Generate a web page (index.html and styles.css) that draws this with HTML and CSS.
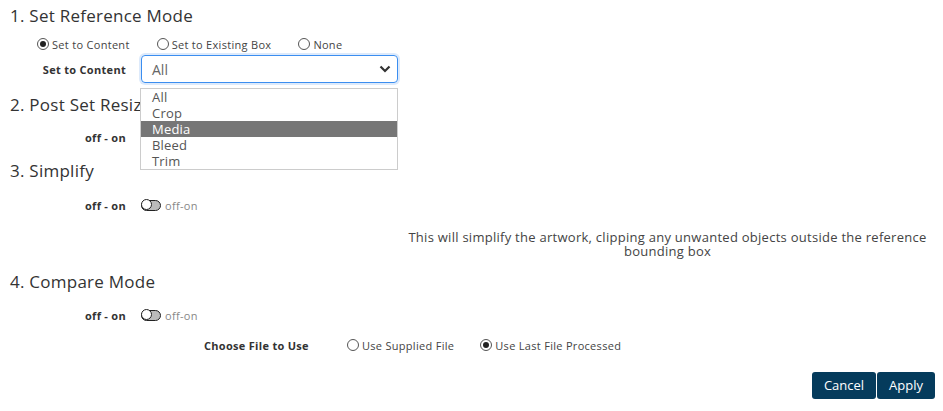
FILE: index.html
```html
<!DOCTYPE html>
<html>
<head>
<meta charset="utf-8">
<link rel="stylesheet" href="styles.css">
</head>
<body>
<div class="page">
  <h2 class="sec-title first">1. Set Reference Mode</h2>
  <div class="radio-row">
    <label class="radio"><span class="dot checked"></span>Set to Content</label>
    <label class="radio"><span class="dot"></span>Set to Existing Box</label>
    <label class="radio"><span class="dot"></span>None</label>
  </div>
  <div class="field-row select-row">
    <span class="field-label">Set to Content</span>
    <div class="select-wrap">
      <div class="select">
        <span>All</span>
        <svg class="chev" width="12" height="8" viewBox="0 0 12 8"><path d="M1.5 1.5 L6 6 L10.5 1.5" fill="none" stroke="#333" stroke-width="2.2"/></svg>
      </div>
      <ul class="options">
        <li>All</li>
        <li>Crop</li>
        <li class="active">Media</li>
        <li>Bleed</li>
        <li>Trim</li>
      </ul>
    </div>
  </div>

  <h2 class="sec-title">2. Post Set Resize</h2>
  <div class="field-row toggle-row r2">
    <span class="field-label">off - on</span>
  </div>

  <h2 class="sec-title s3">3. Simplify</h2>
  <div class="field-row toggle-row r3">
    <span class="field-label">off - on</span>
    <span class="toggle"><span class="knob"></span></span>
    <span class="toggle-text">off-on</span>
  </div>
  <p class="desc">This will simplify the artwork, clipping any unwanted objects outside the reference bounding box</p>

  <h2 class="sec-title s4">4. Compare Mode</h2>
  <div class="field-row toggle-row r4">
    <span class="field-label">off - on</span>
    <span class="toggle"><span class="knob"></span></span>
    <span class="toggle-text">off-on</span>
  </div>
  <div class="file-row">
    <span class="field-label bold">Choose File to Use</span>
    <label class="radio"><span class="dot"></span>Use Supplied File</label>
    <label class="radio"><span class="dot checked"></span>Use Last File Processed</label>
  </div>
  <div class="actions">
    <button class="btn">Cancel</button><button class="btn">Apply</button>
  </div>
</div>
</body>
</html>
```
FILE: styles.css
```css
* { box-sizing: border-box; }
html, body { margin: 0; padding: 0; background: #fff; }
body {
  font-family: "Open Sans", "DejaVu Sans", sans-serif;
  color: #333;
  width: 943px;
  height: 411px;
  overflow: hidden;
}
.page { padding: 0 8px 0 10px; }
.sec-title {
  margin: 0;
  font-size: 17px;
  font-weight: 500;
  line-height: 20px;
  letter-spacing: 0.25px;
  color: #333;
}
.sec-title.first { padding-top: 6px; }
.radio-row {
  display: flex;
  align-items: center;
  height: 16px;
  margin-top: 10px;
  padding-left: 27px;
  gap: 27px;
}
.radio {
  display: inline-flex;
  align-items: center;
  font-size: 11px;
  letter-spacing: 0.3px;
  color: #444;
  gap: 3px;
}
.dot {
  width: 12px;
  height: 12px;
  border: 1px solid #555;
  border-radius: 50%;
  display: inline-block;
  position: relative;
  background: #fff;
}
.dot.checked::after {
  content: "";
  position: absolute;
  left: 2px; top: 2px;
  width: 6px; height: 6px;
  border-radius: 50%;
  background: #222;
}
.field-row {
  display: flex;
  align-items: center;
}
.field-label {
  width: 116px;
  text-align: right;
  font-size: 11px;
  font-weight: 700;
  letter-spacing: 0.3px;
  color: #333;
  margin-right: 15px;
}
.select-row { margin-top: 3px; height: 28px; }
.select-wrap { position: relative; }
.select {
  width: 257px;
  height: 28px;
  border: 1px solid #3b8ef0;
  border-radius: 4px;
  box-shadow: 0 0 0 2px rgba(120,170,240,0.25);
  display: flex;
  align-items: center;
  justify-content: space-between;
  padding: 0 6px 0 10px;
  font-size: 14px;
  color: #666;
}
.options {
  position: absolute;
  left: -1px;
  top: 33px;
  width: 258px;
  margin: 0;
  padding: 0;
  list-style: none;
  border: 1px solid #ccc;
  background: #fff;
  z-index: 5;
}
.options li {
  height: 16px;
  line-height: 16px;
  font-size: 13px;
  letter-spacing: 0.2px;
  color: #555;
  padding-left: 11px;
}
.options li.active { background: #767676; color: #fff; }
.select-row + .sec-title { margin-top: 12px; }
.toggle-row { height: 16px; }
.r2 { margin-top: 14px; }
.s3 { margin-top: 16px; }
.r3 { margin-top: 16px; }
.toggle {
  width: 20px;
  height: 11px;
  border: 1.5px solid #222;
  border-radius: 6px;
  background: #bbb;
  display: inline-block;
  position: relative;
}
.knob {
  position: absolute;
  left: -1.5px; top: -1.5px;
  width: 11px; height: 11px;
  border: 1.5px solid #222;
  border-radius: 50%;
  background: #fff;
}
.toggle-text { font-size: 11px; color: #888; margin-left: 4px; letter-spacing: 0.3px; }
.desc {
  margin: 17px 0 0 390px;
  text-align: center;
  font-size: 13px;
  line-height: 14px;
  letter-spacing: 0.27px;
  color: #444;
}
.s4 { margin-top: 14px; }
.r4 { margin-top: 15px; }
.file-row {
  display: flex;
  align-items: center;
  height: 16px;
  margin-top: 14px;
  padding-left: 194px;
}
.file-row .field-label { width: auto; text-align: left; margin-right: 38px; }
.file-row .radio + .radio { margin-left: 26px; }
.actions {
  display: flex;
  justify-content: flex-end;
  margin-top: 19px;
}
.btn {
  background: #053b5c;
  color: #fff;
  border: none;
  font-family: inherit;
  font-size: 13px;
  line-height: 27px;
  height: 27px;
  padding: 0 12px;
  border-radius: 3px;
}
.btn + .btn { margin-left: 1px; }
```
